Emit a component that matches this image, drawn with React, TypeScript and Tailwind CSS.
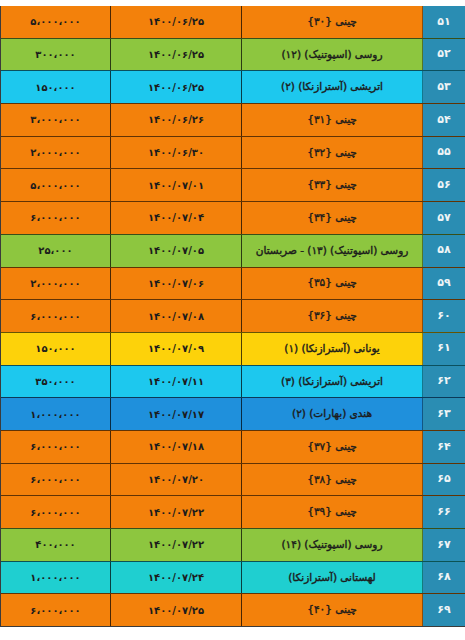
const COLORS = {
  orange: "bg-[#f3810b]",
  green: "bg-[#8dc63f]",
  cyan: "bg-[#1dc8ee]",
  yellow: "bg-[#fdd20a]",
  blue: "bg-[#1f90dc]",
  teal: "bg-[#1fcfd0]",
} as const;

type Row = {
  n: string;
  name: string;
  date: string;
  amount: string;
  color: keyof typeof COLORS;
};

const ROWS: Row[] = [
  { n: "۵۱", name: "چینی {۳۰}", date: "۱۴۰۰/۰۶/۲۵", amount: "۵،۰۰۰،۰۰۰", color: "orange" },
  { n: "۵۲", name: "روسی (اسپوتنیک) (۱۲)", date: "۱۴۰۰/۰۶/۲۵", amount: "۳۰۰،۰۰۰", color: "green" },
  { n: "۵۳", name: "اتریشی (آسترازنکا) (۲)", date: "۱۴۰۰/۰۶/۲۵", amount: "۱۵۰،۰۰۰", color: "cyan" },
  { n: "۵۴", name: "چینی {۳۱}", date: "۱۴۰۰/۰۶/۲۶", amount: "۳،۰۰۰،۰۰۰", color: "orange" },
  { n: "۵۵", name: "چینی {۳۲}", date: "۱۴۰۰/۰۶/۳۰", amount: "۲،۰۰۰،۰۰۰", color: "orange" },
  { n: "۵۶", name: "چینی {۳۳}", date: "۱۴۰۰/۰۷/۰۱", amount: "۵،۰۰۰،۰۰۰", color: "orange" },
  { n: "۵۷", name: "چینی {۳۴}", date: "۱۴۰۰/۰۷/۰۴", amount: "۶،۰۰۰،۰۰۰", color: "orange" },
  { n: "۵۸", name: "روسی (اسپوتنیک) (۱۳) - صربستان", date: "۱۴۰۰/۰۷/۰۵", amount: "۲۵،۰۰۰", color: "green" },
  { n: "۵۹", name: "چینی {۳۵}", date: "۱۴۰۰/۰۷/۰۶", amount: "۲،۰۰۰،۰۰۰", color: "orange" },
  { n: "۶۰", name: "چینی {۳۶}", date: "۱۴۰۰/۰۷/۰۸", amount: "۶،۰۰۰،۰۰۰", color: "orange" },
  { n: "۶۱", name: "یونانی (آسترازنکا) (۱)", date: "۱۴۰۰/۰۷/۰۹", amount: "۱۵۰،۰۰۰", color: "yellow" },
  { n: "۶۲", name: "اتریشی (آسترازنکا) (۳)", date: "۱۴۰۰/۰۷/۱۱", amount: "۳۵۰،۰۰۰", color: "cyan" },
  { n: "۶۳", name: "هندی (بهارات) (۲)", date: "۱۴۰۰/۰۷/۱۷", amount: "۱،۰۰۰،۰۰۰", color: "blue" },
  { n: "۶۴", name: "چینی {۳۷}", date: "۱۴۰۰/۰۷/۱۸", amount: "۶،۰۰۰،۰۰۰", color: "orange" },
  { n: "۶۵", name: "چینی {۳۸}", date: "۱۴۰۰/۰۷/۲۰", amount: "۶،۰۰۰،۰۰۰", color: "orange" },
  { n: "۶۶", name: "چینی {۳۹}", date: "۱۴۰۰/۰۷/۲۲", amount: "۶،۰۰۰،۰۰۰", color: "orange" },
  { n: "۶۷", name: "روسی (اسپوتنیک) (۱۴)", date: "۱۴۰۰/۰۷/۲۲", amount: "۴۰۰،۰۰۰", color: "green" },
  { n: "۶۸", name: "لهستانی (آسترازنکا)", date: "۱۴۰۰/۰۷/۲۴", amount: "۱،۰۰۰،۰۰۰", color: "teal" },
  { n: "۶۹", name: "چینی {۴۰}", date: "۱۴۰۰/۰۷/۲۵", amount: "۶،۰۰۰،۰۰۰", color: "orange" },
];

export default function App() {
  return (
    <div
      className="w-[465px] h-[640px] bg-white pt-[6px]"
      style={{ fontFamily: '"DejaVu Sans", sans-serif' }}
    >
      <div className="flex h-[621px] flex-col border-b border-l border-[#3b3b3b]">
        {ROWS.map((row, i) => (
          <div
            key={row.n}
            className={`flex flex-1 ${COLORS[row.color]} ${i > 0 ? "border-t border-black/60" : ""}`}
          >
            <div className="flex w-[110px] items-center justify-center border-r border-black/70 text-[10px] font-bold text-[#1c1c1c]">
              <span dir="ltr">{row.amount}</span>
            </div>
            <div className="flex w-[131px] items-center justify-center border-r border-black/70 text-[10px] font-bold text-[#1c1c1c]">
              <span dir="ltr">{row.date}</span>
            </div>
            <div
              dir="rtl"
              className="flex w-[181px] items-center justify-center whitespace-nowrap border-r border-black/40 text-[10.5px] text-[#1c1c1c] [-webkit-text-stroke:0.4px_#1c1c1c]"
            >
              {row.name}
            </div>
            <div className="flex flex-1 items-center justify-center bg-[#2a8db3] text-[11px] font-bold text-[#eef4f6]">
              {row.n}
            </div>
          </div>
        ))}
      </div>
    </div>
  );
}
